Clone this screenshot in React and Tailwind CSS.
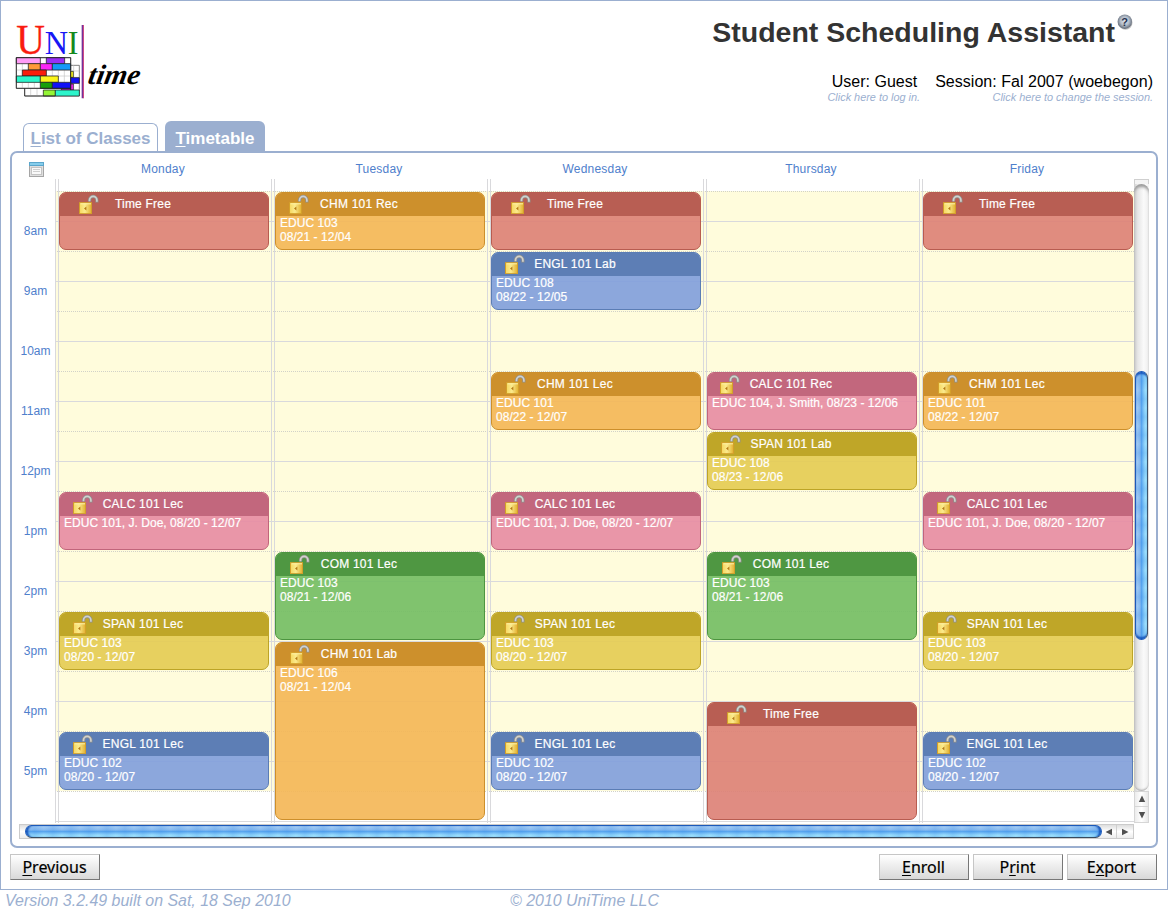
import React from "react";

const DAYS = [
  {
    name: "Monday",
    meetings: [
      { title: "Time Free", tone: "red", place: "row-start-2 row-span-2", icon: "ml-[19px]" },
      { title: "CALC 101 Lec", tone: "pink", place: "row-start-12 row-span-2", icon: "ml-[13px]", lines: ["EDUC 101, J. Doe, 08/20 - 12/07"] },
      { title: "SPAN 101 Lec", tone: "olive", place: "row-start-16 row-span-2", icon: "ml-[13px]", lines: ["EDUC 103", "08/20 - 12/07"] },
      { title: "ENGL 101 Lec", tone: "blue", place: "row-start-20 row-span-2", icon: "ml-[13px]", lines: ["EDUC 102", "08/20 - 12/07"] },
    ],
  },
  {
    name: "Tuesday",
    meetings: [
      { title: "CHM 101 Rec", tone: "orange", place: "row-start-2 row-span-2", icon: "ml-[13px]", lines: ["EDUC 103", "08/21 - 12/04"] },
      { title: "COM 101 Lec", tone: "green", place: "row-start-14 row-span-3", icon: "ml-[14px]", lines: ["EDUC 103", "08/21 - 12/06"] },
      { title: "CHM 101 Lab", tone: "orange", place: "row-start-17 row-span-6", icon: "ml-[14px]", lines: ["EDUC 106", "08/21 - 12/04"] },
    ],
  },
  {
    name: "Wednesday",
    meetings: [
      { title: "Time Free", tone: "red", place: "row-start-2 row-span-2", icon: "ml-[19px]" },
      { title: "ENGL 101 Lab", tone: "blue", place: "row-start-4 row-span-2", icon: "ml-[13px]", lines: ["EDUC 108", "08/22 - 12/05"] },
      { title: "CHM 101 Lec", tone: "orange", place: "row-start-8 row-span-2", icon: "ml-[14px]", lines: ["EDUC 101", "08/22 - 12/07"] },
      { title: "CALC 101 Lec", tone: "pink", place: "row-start-12 row-span-2", icon: "ml-[13px]", lines: ["EDUC 101, J. Doe, 08/20 - 12/07"] },
      { title: "SPAN 101 Lec", tone: "olive", place: "row-start-16 row-span-2", icon: "ml-[13px]", lines: ["EDUC 103", "08/20 - 12/07"] },
      { title: "ENGL 101 Lec", tone: "blue", place: "row-start-20 row-span-2", icon: "ml-[13px]", lines: ["EDUC 102", "08/20 - 12/07"] },
    ],
  },
  {
    name: "Thursday",
    meetings: [
      { title: "CALC 101 Rec", tone: "pink", place: "row-start-8 row-span-2", icon: "ml-[12px]", lines: ["EDUC 104, J. Smith, 08/23 - 12/06"] },
      { title: "SPAN 101 Lab", tone: "olive", place: "row-start-10 row-span-2", icon: "ml-[13px]", lines: ["EDUC 108", "08/23 - 12/06"] },
      { title: "COM 101 Lec", tone: "green", place: "row-start-14 row-span-3", icon: "ml-[14px]", lines: ["EDUC 103", "08/21 - 12/06"] },
      { title: "Time Free", tone: "red", place: "row-start-19 row-span-4", icon: "ml-[19px]" },
    ],
  },
  {
    name: "Friday",
    meetings: [
      { title: "Time Free", tone: "red", place: "row-start-2 row-span-2", icon: "ml-[19px]" },
      { title: "CHM 101 Lec", tone: "orange", place: "row-start-8 row-span-2", icon: "ml-[14px]", lines: ["EDUC 101", "08/22 - 12/07"] },
      { title: "CALC 101 Lec", tone: "pink", place: "row-start-12 row-span-2", icon: "ml-[13px]", lines: ["EDUC 101, J. Doe, 08/20 - 12/07"] },
      { title: "SPAN 101 Lec", tone: "olive", place: "row-start-16 row-span-2", icon: "ml-[13px]", lines: ["EDUC 103", "08/20 - 12/07"] },
      { title: "ENGL 101 Lec", tone: "blue", place: "row-start-20 row-span-2", icon: "ml-[13px]", lines: ["EDUC 102", "08/20 - 12/07"] },
    ],
  },
];

const TONES = {
  red: { border: "border-[#b85c50]", head: "bg-[#b85e53]", body: "bg-[#dd7f74]/90" },
  orange: { border: "border-[#cd8f2b]", head: "bg-[#cd902c]", body: "bg-[#f4b654]/90" },
  blue: { border: "border-[#5b7db5]", head: "bg-[#5d7eb5]", body: "bg-[#809ddb]/90" },
  pink: { border: "border-[#c1657b]", head: "bg-[#c2677d]", body: "bg-[#e78ba2]/90" },
  olive: { border: "border-[#bda426]", head: "bg-[#bfa628]", body: "bg-[#e4cb51]/90" },
  green: { border: "border-[#4d9540]", head: "bg-[#4f9742]", body: "bg-[#72bc62]/90" },
};

const HOURS = ["8am", "9am", "10am", "11am", "12pm", "1pm", "2pm", "3pm", "4pm", "5pm"];

function Logo() {
  return (
    <svg className="block h-[100px] w-[170px] shrink-0" viewBox="0 0 510 300">
      <g fontFamily="Liberation Serif, serif">
        <text x="49" y="131" fontSize="126" fill="#f91c10" stroke="#f91c10" strokeWidth="1" textLength="86" lengthAdjust="spacingAndGlyphs">U</text>
        <text x="134" y="131" fontSize="98" fill="#1717f5" textLength="70" lengthAdjust="spacingAndGlyphs">N</text>
        <text x="203" y="131" fontSize="98" fill="#158a1c" textLength="32" lengthAdjust="spacingAndGlyphs">I</text>
      </g>
      <g stroke="#c4c4c4" strokeWidth="2" fill="#fff">
        <path d="M74 166H238V258H74Z" stroke="#444" />
        <path d="M92 236V258M111 236V258M203 166V258M221 166V258M203 183H238M212 202H238" />
        <path d="M49 143H212V235H49Z" stroke="#333" />
        <path d="M67 143V235M85 143V235M103 143V235M121 143V235M139 143V235M157 143V235M175 143V235M193 143V235M49 161H212M49 180H212M49 198H212M49 217H212" fill="none" />
      </g>
      <g stroke="#222" strokeWidth="2.200">
        <path fill="#ff9bf6" d="M49 143H121V161H49Z" />
        <path fill="#9a2ff5" d="M139 143H194V161H139Z" />
        <path fill="#ff9a38" d="M85 161H121V180H85Z" />
        <path fill="#fb25f7" d="M121 161H157V180H121Z" />
        <path fill="#1499f8" d="M157 161H212V180H157Z" />
        <path fill="#fa1d0b" d="M67 180H139V198H67Z" />
        <path fill="#2df5cb" d="M49 198H121V217H49Z" />
        <path fill="#fbf51b" d="M121 198H175V217H121Z" />
        <path fill="#fbf51b" d="M212 184H220V202H212Z" />
        <path fill="#1111f6" d="M212 203H238V220H212Z" />
        <path fill="#fb25f7" d="M184 235H212V240H184ZM212 222H220V240H212Z" />
        <path fill="#189f0a" d="M121 217H157V235H121Z" />
        <path fill="#1111f6" d="M157 217H212V235H157Z" />
        <path fill="#94f535" d="M130 240H166V258H130Z" />
        <path fill="#2df5cb" d="M166 240H238V258H166Z" />
        <path fill="none" d="M49 143H212V235H49Z M74 236V258H166" />
      </g>
      <path d="M247 45V265" stroke="#74309b" strokeWidth="4" />
      <path d="M250.500 45V265" stroke="#cf4b83" strokeWidth="3" />
      <text transform="translate(261 221) skewX(-10)" x="0" y="0" fontFamily="Liberation Serif, serif" fontWeight="700" fontStyle="italic" fontSize="84" textLength="156" lengthAdjust="spacingAndGlyphs" fill="#000">time</text>
    </svg>
  );
}

function HelpIcon() {
  return (
    <svg className="block size-4" viewBox="0 0 16 16">
      <defs>
        <radialGradient id="ball" cx="0.5" cy="0.45" r="0.6">
          <stop offset="0" stopColor="#e2e8f0" />
          <stop offset="0.5" stopColor="#b3bdca" />
          <stop offset="1" stopColor="#4d5562" />
        </radialGradient>
      </defs>
      <circle cx="8.500" cy="8.800" r="7" fill="#777" opacity="0.45" />
      <circle cx="7.800" cy="7.700" r="7.200" fill="url(#ball)" />
      <text x="7.600" y="11.500" textAnchor="middle" fontFamily="Liberation Sans, sans-serif" fontWeight="700" fontSize="11" fill="#26324f">?</text>
    </svg>
  );
}

function LockIcon({ className }) {
  return (
    <svg className={"block h-5 w-5 " + className} viewBox="0 0 20 20">
      <path d="M10.500 7.600V6.300A3.700 3.900 0 0 1 17.900 6.300V8.400" fill="none" stroke="#8f8f8a" strokeWidth="3.200" />
      <path d="M10.500 7.200V6.300A3.700 3.900 0 0 1 17.900 6.300V7.800" fill="none" stroke="#d2d2ce" strokeWidth="1.700" />
      <rect x="0.500" y="8.700" width="12" height="11" fill="url(#brass)" stroke="#d39f2a" />
      <path d="M1.500 9.800H12" stroke="#fff3a8" />
      <path d="M5 14.500L7.400 12.600V16.600Z" fill="#b57c17" />
    </svg>
  );
}

function Meeting({ title, tone, place, icon, lines = [] }) {
  const t = TONES[tone];
  return (
    <div className={"mb-0.5 ml-[3px] flex w-[210px] flex-col overflow-hidden rounded-[7px] border text-xs text-white " + t.border + " " + t.body + " " + place}>
      <div className={"grid h-[23px] shrink-0 grid-cols-1 " + t.head}>
        <LockIcon className={"col-start-1 row-start-1 mt-px " + icon} />
        <span className="col-start-1 row-start-1 w-[166px] text-center leading-[22px] tracking-[0.22px] [-webkit-text-stroke:0.2px_white]">{title}</span>
      </div>
      <div className="pl-1 leading-[14px] tracking-[0.04px] [-webkit-text-stroke:0.2px_white]">
        {lines.map((line) => (
          <div key={line} className="whitespace-nowrap">{line}</div>
        ))}
      </div>
    </div>
  );
}

function GridLines() {
  return (
    <div className="col-start-1 row-start-1 flex w-[1079px] flex-col">
      <div className="h-3" />
      {Array.from({ length: 21 }, (_, i) => (
        <div
          key={i}
          className={
            "h-[30px] shrink-0 border-t " +
            (i % 2 ? "border-[#d9d9dc] " : "border-dotted border-[#d2d2c8] ") +
            (i < 20 ? "bg-[#fffcdc]" : "bg-white")
          }
        />
      ))}
      <div className="h-px bg-[#d9d9dc]" />
    </div>
  );
}

function Timetable() {
  return (
    <div className="flex h-[644px]">
      <div className="flex w-[43px] flex-col items-center pl-1 pt-[22px] text-xs text-[#4f80cc]">
        {HOURS.map((hour) => (
          <div key={hour} className="h-[60px] leading-[60px]">{hour}</div>
        ))}
      </div>
      <div className="grid h-[644px] w-[1079px] grid-cols-1 overflow-hidden">
        <GridLines />
        <div className="col-start-1 row-start-1 flex">
          {DAYS.map((day) => (
            <div key={day.name} className="h-[644px] w-[216px] shrink-0 border-l border-[#d9d9dc]">
              <div className="ml-0.5 h-full border-l border-[#d9d9dc]" />
            </div>
          ))}
        </div>
        <div className="col-start-1 row-start-1 flex pl-px">
          {DAYS.map((day) => (
            <div key={day.name} className="grid w-[216px] shrink-0 grid-cols-1 grid-rows-[13px_repeat(21,30px)]">
              {day.meetings.map((m) => (
                <Meeting key={m.title + m.place} {...m} />
              ))}
            </div>
          ))}
        </div>
      </div>
      <VerticalScrollbar />
    </div>
  );
}

function Arrow({ d }) {
  return (
    <svg className="block size-2" viewBox="0 0 8 8">
      <path d={d} fill="#505050" />
    </svg>
  );
}

function VerticalScrollbar() {
  return (
    <div className="flex h-[644px] w-[15px] flex-col bg-[linear-gradient(90deg,#d0d0d0,#ededed_30%,#fff_60%,#f3f3f3)]">
      <div className="h-[5px] border border-b-0 border-[#cfcfcf] bg-[#f4f4f4]" />
      <div className="flex h-[607px] flex-col rounded-full bg-[linear-gradient(90deg,#c8c8c8,#e6e6e6_25%,#fafafa_65%,#eeeeee)] shadow-[inset_0_4px_3px_-1px_#9b9b9b,inset_0_-2px_2px_-1px_#aaa]">
        <div className="h-[187px]" />
        <div className="ml-px h-[269px] w-[13px] rounded-full border border-[#1c59b9] border-r-[#3c536d] bg-[repeating-linear-gradient(180deg,#ffffff00_0px,#2b82e430_9px,#ffffff00_18px),linear-gradient(90deg,#a9d0f5,#8bbcf0_35%,#5aa6ef_50%,#8ed2fa_75%,#a8edff)] shadow-[inset_0_3px_2px_-1px_#1554bb,inset_0_-3px_2px_-1px_#1554bb]" />
      </div>
      <div className="flex h-4 items-center justify-center border border-[#d6d6d6] bg-[linear-gradient(90deg,#ececec,#fff_50%,#e8e8e8)]">
        <Arrow d="M4 0.500L7.200 7H0.800Z" />
      </div>
      <div className="flex h-4 items-center justify-center border border-t-0 border-[#d6d6d6] bg-[linear-gradient(90deg,#ececec,#fff_50%,#e8e8e8)]">
        <Arrow d="M0.800 1H7.200L4 7.500Z" />
      </div>
    </div>
  );
}

function HorizontalScrollbar() {
  return (
    <div className="ml-[7px] mt-px flex h-[15px] w-[1115px] border border-[#cbcbcb] bg-[linear-gradient(180deg,#dedede,#fff_50%,#ececec)]">
      <div className="ml-[5px] h-[13px] w-[1077px] rounded-full border border-[#1c59b9] border-b-[#374b60] bg-[repeating-linear-gradient(90deg,#ffffff00_0px,#2b82e430_9px,#ffffff00_18px),linear-gradient(180deg,#a9d0f5,#8bbcf0_35%,#5aa6ef_50%,#8ed2fa_75%,#a8edff)] shadow-[inset_3px_0_2px_-1px_#1554bb,inset_-3px_0_2px_-1px_#1554bb]" />
      <div className="flex w-[14px] items-center justify-center">
        <Arrow d="M7 0.800V7.200L0.500 4Z" />
      </div>
      <div className="flex flex-1 items-center justify-center border-l border-[#cfcfcf]">
        <Arrow d="M1 0.800V7.200L7.500 4Z" />
      </div>
    </div>
  );
}

function CalendarIcon() {
  return (
    <svg className="block h-[15px] w-[15px]" viewBox="0 0 15 15">
      <rect x="0.500" y="0.500" width="14" height="14" fill="#dfdfdf" stroke="#a5a5a5" />
      <rect x="0" y="0" width="15" height="4" fill="#5aa6cc" />
      <rect x="1" y="1" width="13" height="2" fill="#86cdeb" />
      <rect x="2.500" y="5.500" width="10" height="7" fill="#f9f9f9" stroke="#c4c4c4" />
      <path d="M4 7.500H11M4 9.500H11" stroke="#cfcfcf" />
    </svg>
  );
}

function Button({ before = "", hot, after }) {
  return (
    <button className="h-[26px] w-[90px] border border-[#c6c6c6] border-b-[#777] border-r-[#777] bg-linear-to-b from-white to-[#d9d9d9] pr-px text-center font-['Noto_Sans',sans-serif] text-base leading-[24px] text-black [-webkit-text-stroke:0.2px_black]">
      {before}
      <span className="underline underline-offset-2">{hot}</span>
      {after}
    </button>
  );
}

export default function App() {
  return (
    <div className="flex h-[912px] w-[1168px] flex-col overflow-hidden bg-white font-['Liberation_Sans',Arial,sans-serif]">
      <svg className="h-0 w-0">
        <defs>
          <linearGradient id="brass" x1="0" x2="1" y1="0" y2="0">
            <stop offset="0" stopColor="#f6d85f" />
            <stop offset="0.450" stopColor="#fbea8d" />
            <stop offset="1" stopColor="#e2b02f" />
          </linearGradient>
        </defs>
      </svg>
      <div className="flex h-[890px] shrink-0 flex-col border border-[#9bafd0]">
        <header className="flex h-[119px] justify-between">
          <div className="-ml-px pt-[9px]">
            <Logo />
          </div>
          <div className="flex flex-col items-end pr-[14px]">
            <div className="flex h-[72px] items-start pr-5 pt-[13px]">
              <h1 className="whitespace-nowrap pt-px text-[28.5px] font-bold leading-[34px] text-[#333]">Student Scheduling Assistant</h1>
              <div className="ml-0.5">
                <HelpIcon />
              </div>
            </div>
            <div className="flex items-start whitespace-nowrap">
              <div className="flex flex-col items-end">
                <div className="mr-[3px] text-base leading-[18px]">User: Guest</div>
                <div className="text-[10.9px] italic leading-[13px] text-[#9bafd0]">Click here to log in.</div>
              </div>
              <div className="ml-[15px] flex flex-col items-end">
                <div className="text-base leading-[18px] tracking-[0.03px]">Session: Fal 2007 (woebegon)</div>
                <div className="text-[10.9px] italic leading-[13px] text-[#9bafd0]">Click here to change the session.</div>
              </div>
            </div>
          </div>
        </header>

        <nav className="flex h-[31px] items-end pl-[22px] text-[17px] font-bold">
          <div className="h-[28px] w-[135px] whitespace-nowrap rounded-t-[6px] border border-b-0 border-[#9bafd0] text-center leading-[30px] text-[#9bafd0]">
            <span className="underline underline-offset-2">L</span>ist of Classes
          </div>
          <div className="ml-[7px] h-[30px] w-[100px] rounded-t-[6px] bg-[#9bafd0] text-center leading-[35px] text-white">
            <span className="underline underline-offset-2">T</span>imetable
          </div>
        </nav>

        <main className="ml-[9px] h-[697px] w-[1148px] shrink-0 rounded-[7px] border-2 border-[#9bafd0]">
          <div className="flex h-[26px]">
            <div className="w-[43px] pl-[17px] pt-[9px]">
              <CalendarIcon />
            </div>
            {DAYS.map((day) => (
              <div key={day.name} className="w-[216px] pt-px text-center text-xs leading-[30px] tracking-[0.2px] text-[#4f80cc]">{day.name}</div>
            ))}
          </div>
          <Timetable />
          <HorizontalScrollbar />
        </main>

        <div className="flex pl-[9px] pr-[10px] pt-[6px]">
          <Button hot="P" after="revious" />
          <div className="ml-auto flex gap-1">
            <Button hot="E" after="nroll" />
            <Button before="P" hot="r" after="int" />
            <Button before="E" hot="x" after="port" />
          </div>
        </div>
      </div>
      <footer className="flex shrink-0 whitespace-nowrap pl-[5px] text-[15.95px] italic leading-[22px] text-[#9bafd0]">
        <div className="w-[505px]">Version 3.2.49 built on Sat, 18 Sep 2010</div>
        <div>© 2010 UniTime LLC</div>
      </footer>
    </div>
  );
}
